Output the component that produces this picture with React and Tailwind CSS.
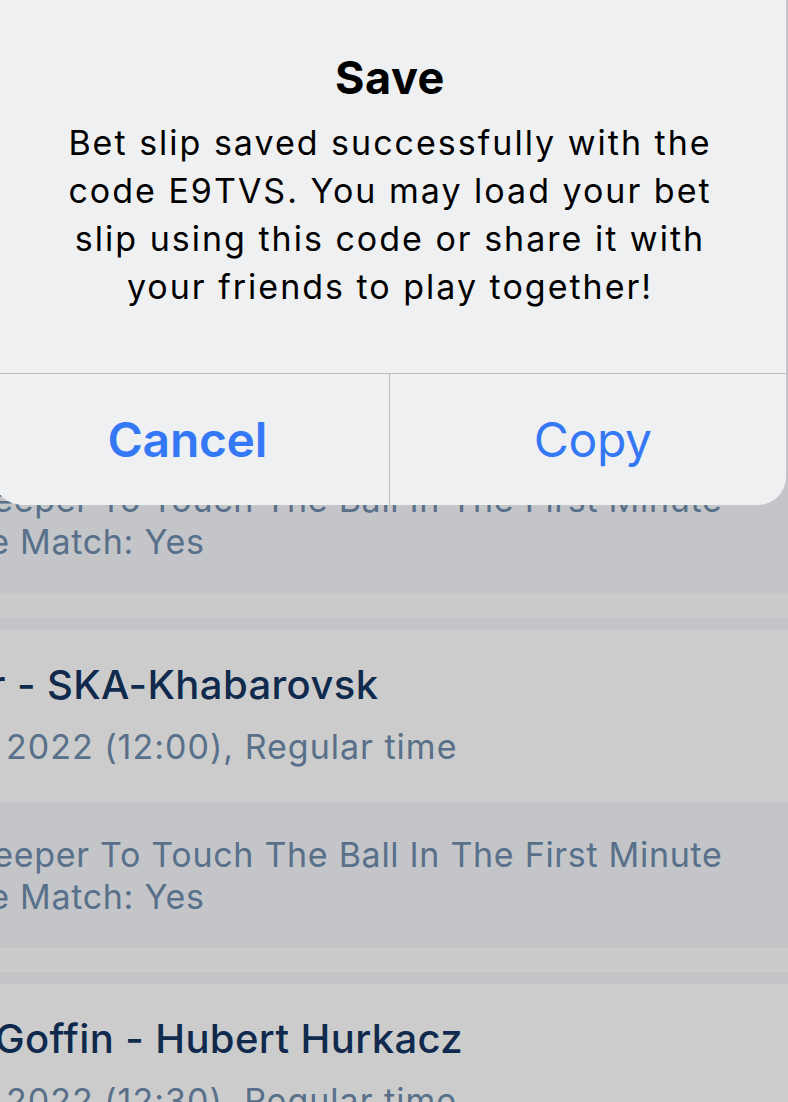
const font = { fontFamily: "Inter, 'Noto Sans', sans-serif" };

// a line whose start is hidden past the left edge: `hidden` overflows leftwards from the anchor
const ClipLine = ({ hidden, text, className, joined }) => (
  <div className={`flex whitespace-nowrap ${className}`}>
    <span className="w-0 flex justify-end">{joined ? hidden : hidden + "\u00a0"}</span>
    <span>{text}</span>
  </div>
);

const Market = ({ className }) => (
  <div className={`text-[#58708a] text-[34px] leading-[42px] tracking-[0.7px] ${className}`}>
    <ClipLine hidden="Goalkeeper" text="To Touch The Ball In The First Minute" className="pl-[100px]" />
    <ClipLine hidden="Of The" text="Match: Yes" className="pl-[20px]" />
  </div>
);

const Event = ({ hidden, title, anchor, date, joined }) => (
  <div className="bg-[#cccccc] pt-[31px] h-[172px]">
    <ClipLine
      hidden={hidden}
      joined={joined}
      text={title}
      className={`${anchor} text-[#0f2a4d] text-[40px] leading-[48px] font-medium tracking-[0.4px]`}
    />
    <ClipLine hidden="12 Feb" text={date} className="pl-[6px] mt-[17px] text-[#58708a] text-[34px] leading-[42px] tracking-[1px]" />
  </div>
);

const Gap = () => (
  <>
    <div className="h-[24px] bg-[#cbcbcb]" />
    <div className="h-[12px] bg-[#c4c5c9]" />
  </>
);

const App = () => {
  return (
    <div className="relative w-[788px] h-[1102px] overflow-hidden bg-[#cbcbcb]" style={font}>
      {/* bet slip list under the dimmed overlay */}
      <div className="flex flex-col">
        <div className="h-[594px] bg-[#c4c5c9] flex flex-col justify-end pb-[31px]">
          <Market />
        </div>
        <Gap />
        <Event hidden="Amur" title="- SKA-Khabarovsk" anchor="pl-[17px]" date="2022 (12:00), Regular time" />
        <div className="h-[146px] bg-[#c4c5c9] pt-[32px]">
          <Market />
        </div>
        <Gap />
        <div className="flex-1 bg-gradient-to-b from-[#cccccc] from-60% to-[#c2c3c6]">
          <Event hidden="David G" joined title="offin - Hubert Hurkacz" anchor="pl-[25px]" date="2022 (12:30), Regular time" />
        </div>
      </div>

      {/* alert */}
      <div className="absolute left-[-6px] top-[-40px] w-[792px] h-[545px] rounded-[28px] bg-[#eff0f1] flex flex-col">
        <div className="flex-1 flex flex-col items-center pt-[92px]">
          <div className="text-[45px] leading-[52px] font-bold text-black tracking-[0.5px]">Save</div>
          <div className="mt-[15px] text-[34px] leading-[48px] text-black text-center whitespace-nowrap tracking-[2px]">
            Bet slip saved successfully with the
            <br />
            code E9TVS. You may load your bet
            <br />
            slip using this code or share it with
            <br />
            your friends to play together!
          </div>
        </div>
        <div className="h-[132px] border-t border-[#bdbdc0] flex">
          <button className="flex-1 flex items-center justify-center pr-[8px] text-[#3478f6] text-[48px] font-semibold tracking-[-0.3px]">
            Cancel
          </button>
          <div className="w-px bg-[#bdbdc0]" />
          <button className="flex-1 flex items-center justify-center pl-[10px] text-[#3478f6] text-[48px] tracking-[-0.3px]">
            Copy
          </button>
        </div>
      </div>
    </div>
  );
};

export default App;
